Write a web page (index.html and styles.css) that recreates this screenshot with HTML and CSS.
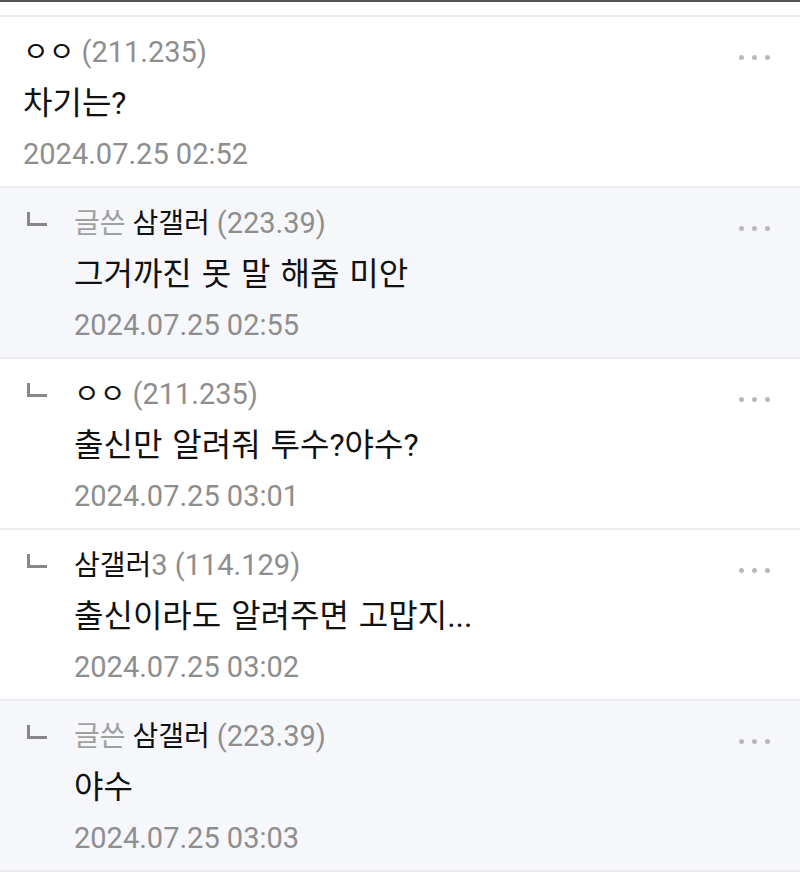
FILE: index.html
```html
<!DOCTYPE html>
<html lang="ko">
<head>
    <meta charset="UTF-8">
    <meta name="viewport" content="width=device-width, initial-scale=1.0">
    <title>댓글</title>
    <link rel="stylesheet" href="styles.css">
</head>
<body>
    <div class="top-bar"></div>
    <div class="comment-list">
        <div class="comment">
            <div class="comment-body">
                <div class="meta"><span class="nick">ㅇㅇ</span> <span class="ip">(211.235)</span></div>
                <div class="text">차기는?</div>
                <div class="date">2024.07.25 02:52</div>
            </div>
            <div class="more"><i></i><i></i><i></i></div>
        </div>

        <div class="comment reply tinted">
            <span class="reply-mark"></span>
            <div class="comment-body">
                <div class="meta"><span class="writer">글쓴</span> <span class="nick">삼갤러</span> <span class="ip">(223.39)</span></div>
                <div class="text">그거까진 못 말 해줌 미안</div>
                <div class="date">2024.07.25 02:55</div>
            </div>
            <div class="more"><i></i><i></i><i></i></div>
        </div>

        <div class="comment reply">
            <span class="reply-mark"></span>
            <div class="comment-body">
                <div class="meta"><span class="nick">ㅇㅇ</span> <span class="ip">(211.235)</span></div>
                <div class="text">출신만 알려줘 투수?야수?</div>
                <div class="date">2024.07.25 03:01</div>
            </div>
            <div class="more"><i></i><i></i><i></i></div>
        </div>

        <div class="comment reply">
            <span class="reply-mark"></span>
            <div class="comment-body">
                <div class="meta"><span class="nick">삼갤러</span><span class="ip">3 (114.129)</span></div>
                <div class="text">출신이라도 알려주면 고맙지...</div>
                <div class="date">2024.07.25 03:02</div>
            </div>
            <div class="more"><i></i><i></i><i></i></div>
        </div>

        <div class="comment reply tinted">
            <span class="reply-mark"></span>
            <div class="comment-body">
                <div class="meta"><span class="writer">글쓴</span> <span class="nick">삼갤러</span> <span class="ip">(223.39)</span></div>
                <div class="text">야수</div>
                <div class="date">2024.07.25 03:03</div>
            </div>
            <div class="more"><i></i><i></i><i></i></div>
        </div>
    </div>
</body>
</html>
```

FILE: styles.css
```css
* {
    margin: 0;
    padding: 0;
    box-sizing: border-box;
}

body {
    background: #ffffff;
    color: #111111;
    font-family: Roboto, "Noto Sans CJK KR", sans-serif;
    font-size: 29px;
}

.top-bar {
    height: 17px;
    border-top: 2px solid #555555;
    border-bottom: 2px solid #ececee;
}

.comment {
    display: flex;
    align-items: flex-start;
    height: 171px;
    padding: 10px 0 6px 23px;
    background: #ffffff;
    border-bottom: 2px solid #ececef;
}

.comment.tinted {
    background: #f6f7fb;
}

.comment.reply {
    padding-left: 27px;
}

.reply-mark {
    flex-shrink: 0;
    width: 20px;
    height: 14px;
    margin-top: 14px;
    margin-right: 27px;
    border-left: 3px solid #888888;
    border-bottom: 3px solid #888888;
}

.comment-body {
    flex: 1;
    line-height: 51px;
}

.meta {
    font-size: 28px;
}

.text {
    font-size: 32px;
    word-spacing: 2px;
}

.nick {
    color: #111111;
}

.ip,
.date {
    color: #8e8e8e;
}

.ip {
    font-size: 29px;
}

.writer {
    color: #a0a0a0;
}

.more {
    display: flex;
    gap: 8px;
    margin-top: 28px;
    margin-right: 30px;
}

.more i {
    width: 5px;
    height: 5px;
    border-radius: 50%;
    background: #b9b9bb;
}
```
